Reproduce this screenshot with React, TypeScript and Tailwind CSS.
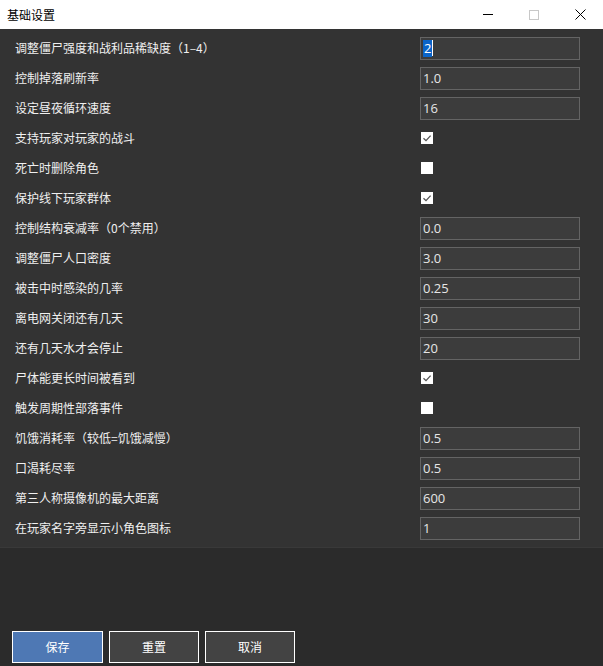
import React from "react";

type Row =
  | { label: string; kind: "text"; value: string; selected?: boolean }
  | { label: string; kind: "check"; checked: boolean };

const rows: Row[] = [
  { label: "调整僵尸强度和战利品稀缺度（1–4）", kind: "text", value: "2", selected: true },
  { label: "控制掉落刷新率", kind: "text", value: "1.0" },
  { label: "设定昼夜循环速度", kind: "text", value: "16" },
  { label: "支持玩家对玩家的战斗", kind: "check", checked: true },
  { label: "死亡时删除角色", kind: "check", checked: false },
  { label: "保护线下玩家群体", kind: "check", checked: true },
  { label: "控制结构衰减率（0个禁用）", kind: "text", value: "0.0" },
  { label: "调整僵尸人口密度", kind: "text", value: "3.0" },
  { label: "被击中时感染的几率", kind: "text", value: "0.25" },
  { label: "离电网关闭还有几天", kind: "text", value: "30" },
  { label: "还有几天水才会停止", kind: "text", value: "20" },
  { label: "尸体能更长时间被看到", kind: "check", checked: true },
  { label: "触发周期性部落事件", kind: "check", checked: false },
  { label: "饥饿消耗率（较低=饥饿减慢）", kind: "text", value: "0.5" },
  { label: "口渴耗尽率", kind: "text", value: "0.5" },
  { label: "第三人称摄像机的最大距离", kind: "text", value: "600" },
  { label: "在玩家名字旁显示小角色图标", kind: "text", value: "1" },
];

const cjk = "font-['Microsoft_YaHei','Noto_Sans_CJK_SC','Noto_Sans',sans-serif]";

function CheckBox({ checked }: { checked: boolean }) {
  return (
    <div className="ml-[1px] flex h-[12px] w-[12px] items-center justify-center bg-white">
      {checked && (
        <svg width="10" height="10" viewBox="0 0 10 10">
          <path d="M1.5 5.2 L4 7.6 L8.6 2.6" fill="none" stroke="#555" strokeWidth="1.3" />
        </svg>
      )}
    </div>
  );
}

function TextBox({ value, selected }: { value: string; selected?: boolean }) {
  return (
    <div className="flex h-[23px] w-[160px] items-center border border-[#646464] bg-[#3c3c3c] pl-[2px] font-['Segoe_UI','Open_Sans',sans-serif] text-[13px] text-[#e6e6e6]">
      {selected ? (
        <span className="flex items-center">
          <span className="bg-[#0a64c8] px-[1px] leading-[17px] text-white">{value}</span>
          <span className="h-[16px] w-[1px] bg-white" />
        </span>
      ) : (
        <span className="leading-[17px]">{value}</span>
      )}
    </div>
  );
}

export default function App() {
  return (
    <div className={`flex h-[666px] w-[603px] flex-col bg-[#2b2b2b] ${cjk}`}>
      {/* title bar */}
      <div className="flex h-[29px] shrink-0 items-center bg-white">
        <span className="pl-[7px] text-[12px] text-black">基础设置</span>
        <div className="ml-auto flex h-full items-center">
          <div className="flex h-full w-[46px] items-center justify-center">
            <div className="h-[1px] w-[10px] bg-black" />
          </div>
          <div className="flex h-full w-[46px] items-center justify-center">
            <div className="h-[10px] w-[10px] border border-[#c8c8c8]" />
          </div>
          <div className="flex h-full w-[46px] items-center justify-center">
            <svg width="11" height="11" viewBox="0 0 11 11">
              <path d="M0.5 0.5 L10.5 10.5 M10.5 0.5 L0.5 10.5" stroke="#000" strokeWidth="1" />
            </svg>
          </div>
        </div>
      </div>

      {/* settings list */}
      <div className="shrink-0 border-b border-[#393939] bg-[#333333] pb-[4px] pt-[4px]">
        {rows.map((r, i) => (
          <div key={i} className="flex h-[30px] items-center pl-[15px] pr-[23px]">
            <span className="flex-1 text-[12px] text-[#f0f0f0]">{r.label}</span>
            <div className="w-[160px]">
              {r.kind === "text" ? (
                <TextBox value={r.value} selected={r.selected} />
              ) : (
                <CheckBox checked={r.checked} />
              )}
            </div>
          </div>
        ))}
      </div>

      <div className="flex-1" />

      {/* action buttons */}
      <div className="flex gap-[6px] pb-[3px] pl-[12px]">
        <button className="flex h-[32px] w-[91px] items-center justify-center border border-white bg-[#4e78b4] text-[12px] text-white">
          保存
        </button>
        <button className="flex h-[32px] w-[90px] items-center justify-center border border-white bg-[#434343] text-[12px] text-white">
          重置
        </button>
        <button className="flex h-[32px] w-[90px] items-center justify-center border border-white bg-[#434343] text-[12px] text-white">
          取消
        </button>
      </div>
    </div>
  );
}
